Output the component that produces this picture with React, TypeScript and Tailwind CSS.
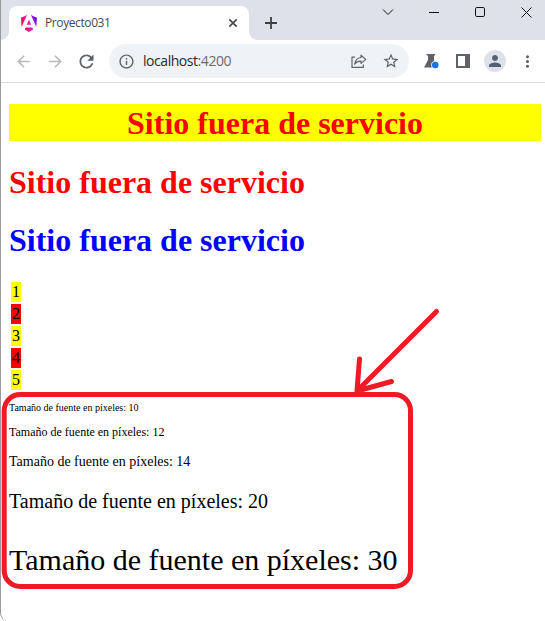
import React from "react";

function AngularLogo() {
  return (
    <svg width="16" height="17" viewBox="0 0 223 236" className="shrink-0">
      <defs>
        <linearGradient id="ng" x1="0" y1="0.7" x2="1" y2="0.3">
          <stop offset="0" stopColor="#f0060b" />
          <stop offset="0.35" stopColor="#f0148c" />
          <stop offset="0.65" stopColor="#cc26d5" />
          <stop offset="1" stopColor="#5a10f0" />
        </linearGradient>
      </defs>
      <path
        fill="url(#ng)"
        d="m222.077 39.192-8.019 125.923L137.387 0l84.69 39.192Zm-53.105 162.825-57.933 33.056-57.934-33.056 11.783-28.556h92.301l11.783 28.556ZM111.039 62.675l30.357 73.803H80.681l30.358-73.803ZM7.937 165.115 0 39.192 84.69 0 7.937 165.115Z"
      />
    </svg>
  );
}

function Glyph({ d, className }: { d: string; className: string }) {
  return (
    <svg viewBox="0 0 24 24" className={`shrink-0 fill-current ${className}`}>
      <path d={d} />
    </svg>
  );
}

function TabStrip() {
  return (
    <div className="flex h-10 bg-[#dee1e9] pl-2">
      <div className="relative mt-1.5 flex h-[34px] w-[240px] items-center rounded-t-lg bg-white pl-3 pr-[11px]">
        <span className="absolute -left-2 bottom-0 size-2 bg-[radial-gradient(circle_at_0_0,transparent_7.5px,white_8px)]" />
        <span className="absolute -right-2 bottom-0 size-2 bg-[radial-gradient(circle_at_100%_0,transparent_7.5px,white_8px)]" />
        <AngularLogo />
        <span className="ml-[8px] flex-1 font-['Open_Sans','Noto_Sans',sans-serif] text-[12px] leading-4 tracking-[-0.4px] text-[#45484c]">
          Proyecto031
        </span>
        <svg width="10" height="10" viewBox="0 0 10 10" stroke="#45484c" strokeWidth="1.7">
          <path d="M1.3 1.3 8.7 8.7M8.7 1.3 1.3 8.7" />
        </svg>
      </div>
      <svg className="ml-[15px] mt-[16px]" width="14" height="14" viewBox="0 0 14 14" stroke="#3c4043" strokeWidth="1.8">
        <path d="M7 1v12M1 7h12" />
      </svg>
      <div className="ml-auto mr-[13px] flex h-6 items-center text-[#111]">
        <svg width="12" height="8" viewBox="0 0 12 8" fill="none" stroke="currentColor" className="mr-[34px]">
          <path d="m1 1.5 5 5 5-5" />
        </svg>
        <svg width="12" height="12" viewBox="0 0 12 12" stroke="currentColor" className="mr-[35px]">
          <path d="M1 6.5h10" />
        </svg>
        <svg width="10" height="10" viewBox="0 0 10 10" fill="none" stroke="currentColor" className="mr-[36px]">
          <rect x=".5" y=".5" width="9" height="9" rx="1.3" />
        </svg>
        <svg width="11" height="11" viewBox="0 0 11 11" stroke="currentColor">
          <path d="m.5.5 10 10M10.500.5.5 10.500" />
        </svg>
      </div>
    </div>
  );
}

function Toolbar() {
  return (
    <div className="flex h-[43px] items-center border-b border-[#dadce0] bg-white pl-[13px] text-[#5f6368]">
      <Glyph className="size-[19px] text-[#b7b9bc]" d="M20 11H7.830l5.590-5.590L12 4l-8 8 8 8 1.410-1.410L7.830 13H20v-2z" />
      <Glyph className="ml-[13px] size-[19px] text-[#b7b9bc]" d="m12 4-1.410 1.410L16.170 11H4v2h12.170l-5.580 5.590L12 20l8-8z" />
      <Glyph className="ml-[11px] size-[21px]" d="M17.650 6.350C16.200 4.900 14.210 4 12 4c-4.420 0-7.990 3.580-7.990 8s3.570 8 7.990 8c3.730 0 6.840-2.550 7.730-6h-2.080c-.82 2.330-3.040 4-5.650 4-3.310 0-6-2.690-6-6s2.690-6 6-6c1.660 0 3.140.69 4.220 1.780L13 11h7V4l-2.350 2.350z" />
      <div className="ml-3 flex h-[34px] w-[300px] items-center rounded-full bg-[#f0f3f6] pl-[9px] pr-[9px]">
        <Glyph className="size-[17px]" d="M11 7h2v2h-2zm0 4h2v6h-2zm1-9C6.480 2 2 6.480 2 12s4.480 10 10 10 10-4.480 10-10S17.520 2 12 2zm0 18c-4.410 0-8-3.590-8-8s3.590-8 8-8 8 3.590 8 8-3.590 8-8 8z" />
        <span className="ml-2 flex-1 font-['Open_Sans','Noto_Sans',sans-serif] text-[14px] leading-5 tracking-[-0.45px] text-[#27292c]">
          localhost<span className="text-[#686c71]">:4200</span>
        </span>
        <svg width="16" height="15" viewBox="0 0 16 15" fill="none" stroke="#5f6368" strokeWidth="1.200" strokeLinejoin="round" className="mr-[15px]">
          <path d="M4 3.100H1v10.300h11.300v-3" />
          <path d="M10 1.200 14.800 5.400 10 9.400V7.200C7.200 7.100 5.200 7.900 3.600 10.200 4.100 6.200 6.200 3.900 10 3.500Z" />
        </svg>
        <Glyph className="size-[18px]" d="m22 9.240-7.190-.62L12 2 9.190 8.630 2 9.240l5.460 4.730L5.820 21 12 17.270 18.180 21l-1.630-7.030L22 9.240zM12 15.400l-3.760 2.270 1-4.280-3.320-2.880 4.380-.38L12 6.100l1.710 4.040 4.380.38-3.320 2.880 1 4.280L12 15.400z" />
      </div>
      <svg className="ml-[15px]" width="16" height="16" viewBox="0 0 16 16">
        <path fill="#5f6368" d="M2.500 1h8.500v1.500h-1V7l3.500 7.500H0L4 7V2.500H2.500z" />
        <circle cx="11.200" cy="12" r="4" fill="#f7f9fc" />
        <circle cx="11.200" cy="12" r="3.300" fill="#1a73e8" />
      </svg>
      <svg className="ml-4" width="14" height="14" viewBox="0 0 14 14">
        <path fill="#5f6368" fillRule="evenodd" d="M0 0h14v14H0zM2 2v10h7V2z" />
      </svg>
      <div className="ml-[14px] flex size-[22px] items-center justify-center rounded-full bg-[#dee1e9]">
        <Glyph className="size-[18px] text-[#536174]" d="M12 12c2.210 0 4-1.790 4-4s-1.790-4-4-4-4 1.790-4 4 1.790 4 4 4zm0 2c-2.670 0-8 1.340-8 4v2h16v-2c0-2.660-5.330-4-8-4z" />
      </div>
      <Glyph className="ml-[12px] size-[19px]" d="M12 8c1.100 0 2-.9 2-2s-.9-2-2-2-2 .9-2 2 .9 2 2 2zm0 2c-1.100 0-2 .9-2 2s.9 2 2 2 2-.9 2-2-.9-2-2-2zm0 6c-1.100 0-2 .9-2 2s.9 2 2 2 2-.9 2-2-.9-2-2-2z" />
    </div>
  );
}

function Annotation() {
  return (
    <svg
      className="pointer-events-none absolute left-0 top-0"
      width="545"
      height="621"
      fill="none"
      stroke="#ed1c24"
      strokeWidth="5"
      strokeLinecap="round"
    >
      <rect x="4.200" y="394.500" width="406.300" height="192" rx="16" />
      <path d="M436.500 311.500 357 391M359.500 359 357 391M391.500 381.500 357 391" />
    </svg>
  );
}

const cells = [1, 2, 3, 4, 5];

export default function App() {
  return (
    <div className="relative h-[621px] w-[545px] overflow-hidden rounded-bl-lg border-l border-[#999] bg-white">
      <TabStrip />
      <Toolbar />
      <main className="pl-2 pr-1 pt-[21px] font-['Liberation_Serif',serif] text-black">
        <h1 className="h-[37px] bg-[#ffff00] text-center text-[32px] font-bold leading-[39px] text-[#ff0000]">
          Sitio fuera de servicio
        </h1>
        <h1 className="mt-[22px] h-[37px] text-[32px] font-bold leading-[38px] text-[#ff0000]">Sitio fuera de servicio</h1>
        <h1 className="mt-[21px] h-[37px] text-[32px] font-bold leading-[39px] text-[#0000ff]">Sitio fuera de servicio</h1>
        <div className="ml-[2px] mt-6 flex w-[10px] flex-col gap-[2px]">
          {cells.map((n) => (
            <div key={n} className="h-5 bg-[#ffff00] px-px text-[16px] leading-5 even:bg-[#ff0000]">
              {n}
            </div>
          ))}
        </div>
        <p className="mt-3 h-[11px] text-[10px] leading-[11px]">Tamaño de fuente en píxeles: 10</p>
        <p className="mt-3 h-[14px] text-[12px] leading-[14px]">Tamaño de fuente en píxeles: 12</p>
        <p className="mt-[15px] h-4 text-[14px] leading-4">Tamaño de fuente en píxeles: 14</p>
        <p className="mt-5 h-[23px] text-[20px] leading-[23px]">Tamaño de fuente en píxeles: 20</p>
        <p className="mt-[30px] h-[34px] text-[30px] leading-[34px]">Tamaño de fuente en píxeles: 30</p>
      </main>
      <div className="absolute -left-px top-0 h-[621px] w-[545px]">
        <Annotation />
      </div>
    </div>
  );
}
